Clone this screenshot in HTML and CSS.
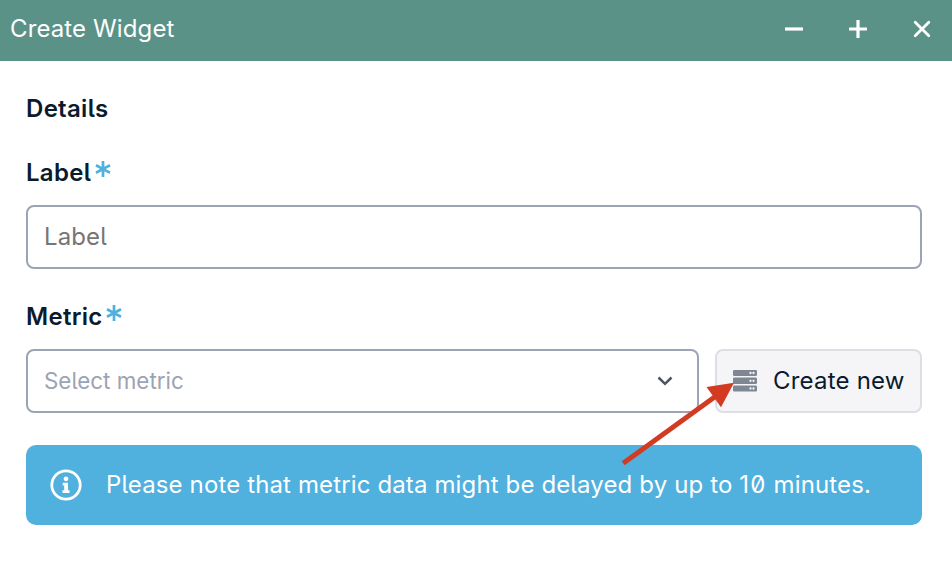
FILE: index.html
```html
<!DOCTYPE html>
<html lang="en">
<head>
<meta charset="utf-8">
<title>Create Widget</title>
<link rel="stylesheet" href="styles.css">
</head>
<body>
<div class="dialog">
  <header class="titlebar">
    <h1 class="title">Create Widget</h1>
    <div class="controls">
      <svg class="control" viewBox="0 0 24 24" aria-label="Minimize"><path d="M3 12H21"/></svg>
      <svg class="control" viewBox="0 0 24 24" aria-label="Maximize"><path d="M3 12H21M12 3V21"/></svg>
      <svg class="control control-close" viewBox="0 0 24 24" aria-label="Close"><path d="M5.2 5.2L18.8 18.8M18.8 5.2L5.2 18.8"/></svg>
    </div>
  </header>
  <main class="content">
    <h2 class="heading">Details</h2>
    <label class="field-label" for="label">Label<svg class="required" viewBox="0 0 16 16" aria-label="required"><path d="M8 0V16M1 4.2L15 11.8M15 4.2L1 11.8"/></svg></label>
    <input class="input" id="label" type="text" placeholder="Label">
    <div class="field-label">Metric<svg class="required" viewBox="0 0 16 16" aria-label="required"><path d="M8 0V16M1 4.2L15 11.8M15 4.2L1 11.8"/></svg></div>
    <div class="metric-row">
      <div class="select">
        <span>Select metric</span>
        <svg class="chevron" viewBox="0 0 16 10"><path d="M1.5 1.5L8 7.8L14.5 1.5"/></svg>
      </div>
      <button class="create" type="button">
        <svg class="server" viewBox="0 0 24 22">
          <rect width="24" height="6" rx="1.3"/><rect y="7.5" width="24" height="6.5" rx="1.3"/><rect y="15.5" width="24" height="6" rx="1.3"/>
          <g class="lights"><circle cx="17.5" cy="3" r="1.15"/><circle cx="20.5" cy="3" r="1.15"/><circle cx="17.5" cy="10.8" r="1.15"/><circle cx="20.5" cy="10.8" r="1.15"/><circle cx="17.5" cy="18.5" r="1.15"/><circle cx="20.5" cy="18.5" r="1.15"/></g>
        </svg>
        <span>Create new</span>
      </button>
      <svg class="arrow" viewBox="0 0 120 90">
        <path class="shaft" d="M3.2 80.3L96 13"/><path class="head" d="M114 -.3L86.5 4L101 24.3Z"/>
      </svg>
    </div>
    <div class="notice">
      <svg class="info" viewBox="0 0 32 32"><circle class="ring" cx="16" cy="16" r="14.2"/><circle cx="16" cy="9.8" r="2.4"/><path d="M12.7 13.8H18V21.2H19.5V24H12.5V21.2H14.2V16.6H12.7Z"/></svg>
      <span>Please note that metric data might be delayed by up to <span class="number">10</span> minutes.</span>
    </div>
  </main>
</div>
</body>
</html>
```

FILE: styles.css
```css
* { box-sizing: border-box; }
body {
  margin: 0;
  background: #fff;
  color: #0b1b2d;
  font-family: Inter, "Liberation Sans", sans-serif;
  font-size: 24px;
  line-height: 32px;
  letter-spacing: 0.1px;
  font-feature-settings: "zero", "cv05";
}
.titlebar {
  display: flex;
  align-items: center;
  justify-content: space-between;
  height: 61px;
  padding: 0 18px 4px 10px;
  background: #5a9288;
  color: #fff;
}
.title { margin: 0; font-size: 24px; font-weight: 400; letter-spacing: 0.12px; }
.controls { display: flex; gap: 40px; }
.control { width: 24px; height: 24px; fill: none; stroke: #fff; stroke-width: 3.2; }
.control-close { stroke-linecap: round; stroke-width: 2.8; }
.content { padding: 32px 30px 0 26px; }
.heading { margin: 0 0 32px; font-size: 24px; line-height: 32px; font-weight: 600; letter-spacing: 0.3px; }
.field-label { display: flex; height: 32px; margin-bottom: 16px; font-weight: 600; letter-spacing: 0.3px; }
.required {
  width: 16px;
  height: 16px;
  margin: 4px 0 0 3.5px;
  fill: none;
  stroke: #50b0de;
  stroke-width: 2.7;
}
.input {
  display: block;
  width: 100%;
  height: 64px;
  margin-bottom: 32px;
  padding: 0 16px 2px;
  border: 2px solid #9ca3b2;
  border-radius: 8px;
  background: #fff;
  font: inherit;
  letter-spacing: inherit;
  font-feature-settings: inherit;
}
.input::placeholder { color: #757575; opacity: 1; }
.metric-row { position: relative; display: flex; gap: 16px; height: 64px; margin-bottom: 32px; }
.select {
  display: flex;
  flex: 1;
  align-items: center;
  justify-content: space-between;
  padding: 0 24px 0 16px;
  border: 2px solid #9ca3b2;
  border-radius: 8px;
  color: #9ca3b2;
  font-size: 22.4px;
  letter-spacing: 0;
}
.chevron { width: 16px; height: 10px; fill: none; stroke: #4b5563; stroke-width: 2.5; }
.create {
  display: flex;
  align-items: center;
  gap: 16px;
  width: 207px;
  padding: 0 0 0 16px;
  border: 2px solid #dedfe4;
  border-radius: 8px;
  background: #f5f5f8;
  color: #0b1b2d;
  font: inherit;
  letter-spacing: 0.2px;
  font-feature-settings: inherit;
  white-space: nowrap;
}
.server { width: 24px; height: 22px; flex: none; fill: #7f8892; }
.lights { fill: #f5f5f8; }
.arrow { position: absolute; left: 594px; top: 34px; width: 120px; height: 90px; overflow: visible; }
.shaft { fill: none; stroke: #d23a22; stroke-width: 5; }
.head { fill: #d23a22; }
.notice {
  display: flex;
  align-items: center;
  gap: 24px;
  height: 80px;
  padding-left: 24px;
  border-radius: 10px;
  background: #50b0de;
  color: #fff;
  letter-spacing: 0.13px;
  white-space: nowrap;
}
.number { letter-spacing: 1.2px; }
.info { width: 32px; height: 32px; fill: #fff; }
.ring { fill: none; stroke: #fff; stroke-width: 2.8; }
```
